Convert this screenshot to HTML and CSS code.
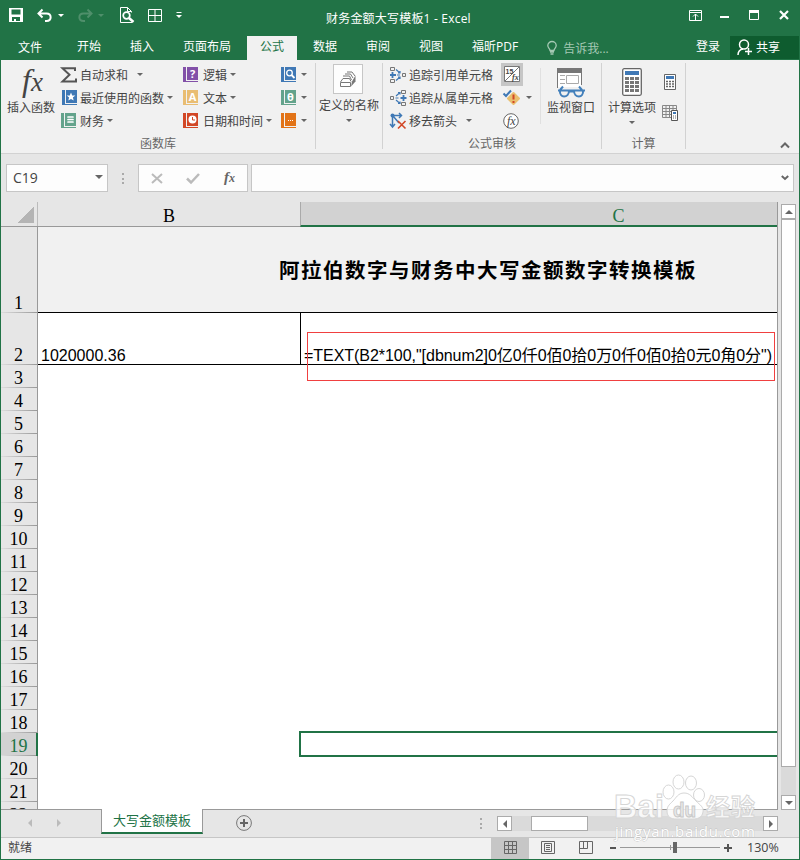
FILE: index.html
```html
<!DOCTYPE html>
<html lang="zh-CN">
  <head>
    <meta charset="UTF-8" />
    <title>财务金额大写模板1 - Excel</title>
    <link rel="stylesheet" href="styles.css">
  </head>
  <body>
    <div class="window">
      <header class="titlebar">
        <div class="quick">
          <svg class="q-save" width="14" height="14" viewBox="0 0 14 14"><path d="M0 0h14v14H0z" fill="#fff"/><path d="M2.5 1.5h9v5h-9zM3 9h8v4H7v-2H5v2H3z" fill="#217346"/></svg>
          <svg class="q-undo" width="15" height="13" viewBox="0 0 15 13"><path d="M5.5 0.5L1.5 4.5l4 4M2 4.5h7.5c5.5 0 5.500 7.500 0 7.500H8" fill="none" stroke="#fff" stroke-width="2"/></svg>
          <i class="arrow white"></i>
          <svg class="q-redo" width="15" height="13" viewBox="0 0 15 13"><path d="M9.500 0.500l4 4-4 4M13 4.500H5.500C0 4.500 0 12 5.500 12H7" fill="none" stroke="#4f8f6b" stroke-width="2"/></svg>
          <i class="arrow dim"></i>
          <svg class="q-preview" width="15" height="16" viewBox="0 0 15 16"><path d="M12 15.500H.5V.5h7l4 4v1M7.500.5v4h4" fill="none" stroke="#fff"/><circle cx="6.500" cy="8.500" r="3.300" fill="#217346" stroke="#fff" stroke-width="1.700"/><path d="M9 11l4.500 4" stroke="#fff" stroke-width="2.500"/></svg>
          <svg class="q-grid" width="14" height="13" viewBox="0 0 14 13"><path d="M.5.5h13v12H.5zM7 .5v12M.5 6.500h13" fill="none" stroke="#fff"/></svg>
          <svg class="q-more" width="6" height="7" viewBox="0 0 6 7"><path d="M.5.5h5" stroke="#fff"/><path d="M0 3h6L3 6z" fill="#fff"/></svg>
        </div>
        <div class="title">财务金额大写模板1 - Excel</div>
        <div class="winbuttons">
          <svg width="13" height="11" viewBox="0 0 13 11"><path d="M.5.5h12v10H.5zM.5 2.500h12M6.500 4v6M4 6.500L6.500 4 9 6.500" fill="none" stroke="#fff"/></svg>
          <svg width="9" height="11" viewBox="0 0 9 11"><path d="M0 7h9" stroke="#fff" stroke-width="2"/></svg>
          <svg width="10" height="10" viewBox="0 0 10 10"><path d="M.5.500h9v9h-9z" fill="none" stroke="#fff"/><path d="M0 0h10v3H0z" fill="#fff"/></svg>
          <svg width="10" height="10" viewBox="0 0 10 10"><path d="M1 1l8 8M9 1L1 9" stroke="#fff" stroke-width="2.200"/></svg>
        </div>
      </header>

      <nav class="tabs">
        <span class="tab file">文件</span>
        <span class="tab">开始</span>
        <span class="tab">插入</span>
        <span class="tab">页面布局</span>
        <span class="tab active">公式</span>
        <span class="tab">数据</span>
        <span class="tab">审阅</span>
        <span class="tab">视图</span>
        <span class="tab">福昕PDF</span>
        <span class="tell">
          <svg width="10" height="14" viewBox="0 0 10 14"><path d="M3 9.500C3 7.500.8 7 .8 4.500a4.200 4 0 0 1 8.400 0C9.200 7 7 7.500 7 9.500zM3 11h4M3.500 13h3" fill="none" stroke="#a5c9b4" stroke-width="1.300"/></svg>
          告诉我...
        </span>
        <span class="login">登录</span>
        <span class="share">
          <svg width="16" height="17" viewBox="0 0 16 17"><circle cx="7" cy="5.500" r="4.500" fill="none" stroke="#fff" stroke-width="1.500"/><path d="M1 16c0-3.500 2-5.500 5-6M11.500 9v7M8 12.500h7" fill="none" stroke="#fff" stroke-width="1.500"/></svg>
          共享
        </span>
      </nav>

      <section class="ribbon">
        <div class="group library">
          <div class="tools">
            <div class="big insert">
              <svg width="26" height="31" viewBox="0 0 26 31"><text class="fx" x="4" y="24" font-size="32">f</text><text class="fx" x="13" y="24" font-size="27">x</text></svg>
              <span>插入函数</span>
            </div>
            <div class="col col-a">
              <div class="tool wide-arrow"><svg width="16" height="16" viewBox="0 0 16 16"><path d="M14 4V1.200H1.500l7 6.500-7 6.800H15V11.500" fill="none" stroke="#555" stroke-width="2"/></svg>自动求和<i class="arrow"></i></div>
              <div class="tool"><svg width="16" height="16" viewBox="0 0 16 16"><path d="M1 0h3v15H1zM5 0h11v13H5zM3 14h13v1H3z" fill="#3f78b5"/><path d="M10 2.500l1.200 2.900 3.100.2-2.400 2 .8 3L10 8.900l-2.700 1.700.8-3-2.400-2 3.100-.2z" fill="#fff"/></svg>最近使用的函数<i class="arrow"></i></div>
              <div class="tool"><svg width="16" height="16" viewBox="0 0 16 16"><path d="M0 0h3v15H0zM4 0h11v13H4zM2 14h13v1H2z" fill="#63a38c"/><path d="M7 4h5M7 6.500h5M7 9h5" stroke="#fff" stroke-width="1.700" stroke-linecap="round"/></svg>财务<i class="arrow"></i></div>
            </div>
            <div class="col col-b">
              <div class="tool"><svg width="16" height="16" viewBox="0 0 16 16"><path d="M0 0h3v15H0zM4 0h11v13H4zM2 14h13v1H2z" fill="#8250a8"/><text class="glyph" x="9.500" y="10.500">?</text></svg>逻辑<i class="arrow"></i></div>
              <div class="tool"><svg width="16" height="16" viewBox="0 0 16 16"><path d="M0 0h3v15H0zM4 0h11v13H4zM2 14h13v1H2z" fill="#e9bd72"/><text class="glyph" x="9.500" y="10.500">A</text></svg>文本<i class="arrow"></i></div>
              <div class="tool"><svg width="16" height="16" viewBox="0 0 16 16"><path d="M0 0h3v15H0zM4 0h11v13H4zM2 14h13v1H2z" fill="#d24726"/><circle cx="9.500" cy="6.500" r="4" fill="#fff"/><path d="M9.500 4V7H12" fill="none" stroke="#d24726"/></svg>日期和时间<i class="arrow"></i></div>
            </div>
            <div class="col col-c">
              <div class="tool"><svg width="16" height="16" viewBox="0 0 16 16"><path d="M0 0h3v15H0zM4 0h11v13H4zM2 14h13v1H2z" fill="#3f78b5"/><circle cx="8.500" cy="6" r="2.800" fill="none" stroke="#fff" stroke-width="1.300"/><path d="M10.500 8l3 3" stroke="#fff" stroke-width="1.800"/></svg><i class="arrow"></i></div>
              <div class="tool"><svg width="16" height="16" viewBox="0 0 16 16"><path d="M0 0h3v15H0zM4 0h11v13H4zM2 14h13v1H2z" fill="#63a38c"/><text class="glyph" x="9.500" y="10.500">θ</text></svg><i class="arrow"></i></div>
              <div class="tool"><svg width="16" height="16" viewBox="0 0 16 16"><path d="M0 0h3v15H0zM4 0h11v13H4zM2 14h13v1H2z" fill="#e27317"/><path d="M7 7.500h1M9 7.500h1M11 7.500h1" stroke="#fff" stroke-width="1.200"/></svg><i class="arrow"></i></div>
            </div>
          </div>
          <div class="group-name">函数库</div>
        </div>

        <div class="group names">
          <div class="big">
            <div class="iconbox">
              <svg width="18" height="17" viewBox="0 0 18 17"><path d="M1.500 11.500h10v4h-10zM1.500 11l2.500-3.500h6.500l1.500 3M4 5h6.500l2 4M6 3h5.500l2.500 4M8 1h5l3 4" fill="none" stroke="#777"/><path d="M12 15.500l4.500-5V4.500l-3.500 6z" fill="#777"/></svg>
            </div>
            <span>定义的名称</span>
            <i class="arrow"></i>
          </div>
        </div>

        <div class="group audit">
          <div class="tools">
            <div class="col col-d">
              <div class="tool"><svg width="17" height="16" viewBox="0 0 17 16"><path d="M.5.500h4v3h-4zM.5 12.500h4v3h-4zM12.500 6.500h3v3h-3z" fill="none" stroke="#777"/><path d="M2.500 5v6M0 8h6" fill="none" stroke="#3f78b5" stroke-width="1.800"/><path d="M7 8h3M6 2.500l4 3.500M6 13.500l4-3.500M8 6h2V4M8 10h2v2" fill="none" stroke="#3f78b5" stroke-width="1.200"/></svg>追踪引用单元格</div>
              <div class="tool"><svg width="17" height="16" viewBox="0 0 17 16"><path d="M.5 6.500h3v3h-3zM11.500.500h4v3h-4zM11.500 12.500h4v3h-4z" fill="none" stroke="#777"/><path d="M13.500 5v6M10.500 8h6" fill="none" stroke="#3f78b5" stroke-width="1.800"/><path d="M5.500 8h3M6 6l4-3.500M6 10l4 3.500M8 2.500h2v2M8 13.500h2v-2" fill="none" stroke="#3f78b5" stroke-width="1.200"/></svg>追踪从属单元格</div>
              <div class="tool wide-arrow"><svg width="17" height="16" viewBox="0 0 17 16"><path d="M2.500 1.500v12M0 11l2.500 3L5 11M2.500 2.500h9M9 0l2.500 2.500L9 5M3 3l6 7" fill="none" stroke="#3f78b5" stroke-width="1.500"/><circle cx="2.500" cy="2.500" r="2" fill="#3f78b5"/><path d="M8 8l7.500 7.500M15.500 8L8 15.500" stroke="#d24726" stroke-width="1.600"/></svg>移去箭头<i class="arrow"></i></div>
            </div>
            <div class="col col-e">
              <div class="tool"><span class="pressed"><svg width="16" height="16" viewBox="0 0 16 16"><path d="M.5.500h15v15H.5z" fill="#fff" stroke="#777"/><path d="M1 15L15 1" stroke="#777"/><text x="1.500" y="7.500" class="mini">15</text><text x="8" y="14" class="mini fx-mini">fx</text></svg></span></div>
              <div class="tool"><svg width="17" height="16" viewBox="0 0 17 16"><path d="M10.500 3l5.500 5.500-5.500 5.500L5 8.500z" fill="#eabf6f" stroke="#eabf6f" stroke-width="2" stroke-linejoin="round"/><path d="M10.500 4.500v5M10.500 11v2" stroke="#d24726" stroke-width="2"/><path d="M.5 3.500L3 6 8 .5" fill="none" stroke="#3f78b5" stroke-width="2"/></svg><i class="arrow"></i></div>
              <div class="tool"><svg width="17" height="16" viewBox="0 0 17 16"><circle cx="8" cy="8" r="7.300" fill="#fff" stroke="#666"/><text class="fx" x="4" y="11.500" font-size="12">fx</text></svg></div>
            </div>
            <div class="big watch">
              <svg width="30" height="30" viewBox="0 0 30 30"><path d="M1.500 1v19M25.500 1v16" stroke="#777"/><path d="M2 5h23v14H2z" fill="#fff"/><path d="M1 0h25v5H1z" fill="#777"/><path d="M10.500 7.500h12v8h-12zM4 7.500h5M4 11.500h5M4 15.500h5" fill="none" stroke="#aaa"/><path d="M4 22l3-3.500M26 22l-3-3.500M2 22.500h27M13 23.500h5M4 22.500c-1 8 9 8 9 0zM18 22.500c0 8 10 8 9 0z" fill="none" stroke="#4380bb" stroke-width="2"/></svg>
              <span>监视窗口</span>
            </div>
          </div>
          <div class="group-name">公式审核</div>
        </div>

        <div class="group calc">
          <div class="tools">
            <div class="big options">
              <svg width="20" height="28" viewBox="0 0 20 28"><rect x=".7" y=".7" width="18.600" height="26.600" rx="1.500" fill="#fff" stroke="#666" stroke-width="1.300"/><path d="M3 3h14v4H3z" fill="#3f78b5"/><path d="M3 10.500h14M3 14.500h14M3 18.500h14M3 22.500h14" stroke="#777" stroke-width="3" stroke-dasharray="4 1"/></svg>
              <span>计算选项</span>
              <i class="arrow"></i>
            </div>
            <div class="calc-small">
              <svg width="12" height="16" viewBox="0 0 12 16"><path d="M.5.500h11v15H.5z" fill="#fff" stroke="#666"/><path d="M2 2h8v3H2z" fill="#3f78b5"/><path d="M2 7.500h8M2 10h8M2 12.500h8" stroke="#666" stroke-width="1.600" stroke-dasharray="2 1"/></svg>
              <svg width="16" height="16" viewBox="0 0 16 16"><path d="M.5.500h14v12H.5zM.5 3.500h14M.5 6.500h14M.5 9.500h14M4 .5v12M7.500.5v12M11 .5v12" fill="none" stroke="#888"/><path d="M9.500 5.500h6v10h-6z" fill="#fff" stroke="#555"/><path d="M11 7h3v2h-3z" fill="#3f78b5"/><path d="M11 11h3M11 13h3" stroke="#666" stroke-dasharray="1 1"/></svg>
            </div>
          </div>
          <div class="group-name">计算</div>
        </div>
        <svg class="collapse" width="10" height="7" viewBox="0 0 10 7"><path d="M1 5.500l4-4 4 4" fill="none" stroke="#666" stroke-width="2"/></svg>
      </section>

      <section class="formula-bar">
        <div class="box name-box">C19<i class="arrow big-arrow"></i></div>
        <i class="grip"></i>
        <div class="box buttons">
          <svg width="12" height="11" viewBox="0 0 12 11"><path d="M1 1l10 9M11 1L1 10" stroke="#bbb" stroke-width="2"/></svg>
          <svg width="14" height="11" viewBox="0 0 14 11"><path d="M1 5.500L5 9.500 13 1" fill="none" stroke="#bbb" stroke-width="2.500"/></svg>
          <svg width="14" height="16" viewBox="0 0 14 16"><text class="fx bold" x="1" y="12" font-size="15">f</text><text class="fx bold" x="6" y="12" font-size="12">x</text></svg>
        </div>
        <div class="box input"><svg width="8" height="6" viewBox="0 0 8 6"><path d="M.8 1L4 4l3.200-3" fill="none" stroke="#666" stroke-width="2"/></svg></div>
      </section>

      <section class="workspace">
        <div class="sheet">
          <div class="col-heads">
            <div class="corner"></div>
            <div class="head-b">B</div>
            <div class="head-c">C</div>
          </div>
          <div class="row row-1"><div class="num">1</div><div class="merged">阿拉伯数字与财务中大写金额数字转换模板</div></div>
          <div class="row row-2">
            <div class="num">2</div>
            <div class="cell b">1020000.36</div>
            <div class="cell c">=TEXT(B2*100,"[dbnum2]0亿0仟0佰0拾0万0仟0佰0拾0元0角0分")<div class="mark"></div></div>
          </div>
          <div class="row"><div class="num">3</div></div>
          <div class="row"><div class="num">4</div></div>
          <div class="row"><div class="num">5</div></div>
          <div class="row"><div class="num">6</div></div>
          <div class="row"><div class="num">7</div></div>
          <div class="row"><div class="num">8</div></div>
          <div class="row"><div class="num">9</div></div>
          <div class="row"><div class="num">10</div></div>
          <div class="row"><div class="num">11</div></div>
          <div class="row"><div class="num">12</div></div>
          <div class="row"><div class="num">13</div></div>
          <div class="row"><div class="num">14</div></div>
          <div class="row"><div class="num">15</div></div>
          <div class="row"><div class="num">16</div></div>
          <div class="row"><div class="num">17</div></div>
          <div class="row"><div class="num">18</div></div>
          <div class="row current"><div class="num">19</div><div class="cell b"></div><div class="cell c"><div class="cursor"></div></div></div>
          <div class="row"><div class="num">20</div></div>
          <div class="row"><div class="num">21</div></div>
          <div class="row"><div class="num">22</div></div>
        </div>
        <div class="vscroll">
          <div class="sbtn"><i class="tri up"></i></div>
          <div class="vthumb"></div>
          <div class="sbtn last"><i class="tri down"></i></div>
        </div>
      </section>

      <section class="sheet-tabs">
        <div class="tab-nav"><i class="tri left"></i><i class="tri right"></i></div>
        <div class="sheet-tab">大写金额模板</div>
        <div class="tab-rest">
          <svg class="add" width="16" height="16" viewBox="0 0 16 16"><circle cx="8" cy="8" r="7.400" fill="none" stroke="#777"/><path d="M8 4v8M4 8h8" stroke="#666" stroke-width="2"/></svg>
          <i class="grip"></i>
          <div class="hscroll">
            <div class="sbtn"><i class="tri left"></i></div>
            <div class="hthumb"></div>
            <div class="sbtn last"><i class="tri right"></i></div>
          </div>
        </div>
      </section>

      <footer class="status">
        <span class="ready">就绪</span>
        <div class="view on"><svg width="13" height="13" viewBox="0 0 13 13"><path d="M.5.500h12v12H.5zM4.500.5v12M8.500.5v12M.5 4.500h12M.5 8.500h12" fill="none" stroke="#666"/></svg></div>
        <div class="view"><svg width="14" height="13" viewBox="0 0 14 13"><path d="M.5.500h13v12H.5zM3.500 2.500h7v8h-7zM5 4.500h4M5 6.500h4M5 8.500h4" fill="none" stroke="#666"/></svg></div>
        <div class="view"><svg width="14" height="13" viewBox="0 0 14 13"><path d="M.5.500h13v12H.5zM.5 7.500h8v-7M4.500.500v7" fill="none" stroke="#666"/></svg></div>
        <div class="zoom">
          <i class="minus"></i>
          <div class="slider"><i class="mid"></i><i class="knob"></i></div>
          <svg width="8" height="8" viewBox="0 0 8 8"><path d="M4 0v8M0 4h8" stroke="#555" stroke-width="2"/></svg>
          <span>130%</span>
        </div>
      </footer>

      <svg class="watermark" width="150" height="75" viewBox="0 0 150 75">
        <g class="wm">
          <text x="3" y="46" font-size="33" textLength="50" lengthAdjust="spacingAndGlyphs">Bai</text>
          <ellipse cx="57.500" cy="20" rx="5.500" ry="7"/>
          <ellipse cx="67.500" cy="10" rx="5.500" ry="7"/>
          <ellipse cx="80" cy="11" rx="5.500" ry="7"/>
          <ellipse cx="88" cy="23" rx="5.500" ry="6.500"/>
          <path d="M73 21c6 0 8 4 12 8s8 6 7 11c-1 6-6 7-10 7H65c-5 0-9-2-9-8 0-5 3-7 6-10s5-8 11-8z"/>
          <text class="du" x="62" y="45" font-size="21" textLength="23" lengthAdjust="spacingAndGlyphs">du</text>
          <text class="cn" x="95" y="44" font-size="24" textLength="49">经验</text>
        </g>
        <text class="url" x="4" y="65" textLength="140">jingyan.baidu.com</text>
      </svg>
    </div>
  </body>
</html>
```
FILE: styles.css
```css
* {
  box-sizing: border-box;
}
body {
  margin: 0;
  font-family: "Open Sans", "Noto Sans CJK SC", sans-serif;
  font-size: 12px;
  color: #444;
}
svg {
  display: block;
  flex: none;
  overflow: visible;
}
.window {
  position: relative;
  display: flex;
  flex-direction: column;
  width: 800px;
  height: 860px;
  border: 1px solid #217346;
  border-top: 0;
  background: #e6e6e6;
  overflow: hidden;
}

/* title bar */
.titlebar {
  display: flex;
  height: 36px;
  background: #217346;
  color: #fff;
}
.quick {
  display: flex;
  align-items: center;
  width: 325px;
  padding: 0 0 6px 8px;
}
.q-undo {
  margin: 0 6px 0 14px;
}
.q-redo {
  margin: 0 5px 0 14px;
}
.q-preview {
  margin-left: 16px;
}
.q-grid {
  margin-left: 13px;
}
.q-more {
  margin-left: 14px;
}
.title {
  line-height: 37px;
  letter-spacing: 0.2px;
  white-space: nowrap;
}
.winbuttons {
  display: flex;
  align-items: center;
  margin-left: auto;
  gap: 20px;
  padding: 0 10px 6px 0;
}
.winbuttons svg:first-child {
  margin-right: -2px;
}

.arrow {
  flex: none;
  width: 0;
  height: 0;
  margin-left: 3px;
  border: 3px solid transparent;
  border-top-color: #666;
  border-bottom: 0;
}
.arrow.white {
  margin-left: 0;
  border-top-color: #fff;
}
.arrow.dim {
  margin-left: 0;
  border-top-color: #4f8f6b;
}

/* ribbon tabs */
.tabs {
  display: flex;
  height: 24px;
  gap: 3px;
  background: #217346;
  color: #fff;
  line-height: 21px;
  white-space: nowrap;
}
.tab {
  padding: 0 13px;
}
.tab.file {
  width: 60px;
  padding: 1px 0 0 17px;
}
.tab.active {
  background: #f1f1f1;
  color: #217346;
}
.tell {
  display: flex;
  align-items: center;
  gap: 6px;
  margin-left: 13px;
  color: #a5c9b4;
}
.login {
  margin-left: auto;
}
.share {
  display: flex;
  align-items: center;
  gap: 3px;
  width: 69px;
  height: 23px;
  margin-left: 7px;
  padding-left: 7px;
  background: #0e5c2f;
}

/* ribbon */
.ribbon {
  display: flex;
  height: 94px;
  padding-top: 3px;
  background: #f1f1f1;
  border-bottom: 1px solid #d2d2d2;
  white-space: nowrap;
}
.group {
  display: flex;
  flex-direction: column;
  height: 86px;
  border-right: 1px solid #d2d2d2;
}
.tools {
  display: flex;
  flex: none;
  height: 71px;
}
.group-name {
  color: #666;
  text-align: center;
  line-height: 20px;
}
.library {
  width: 315px;
}
.names {
  width: 67px;
}
.audit {
  width: 219px;
}
.calc {
  width: 84px;
}
.big {
  display: flex;
  flex-direction: column;
  align-items: center;
  line-height: 16px;
}
.big .arrow {
  margin: 5px 0 0;
}
.insert {
  width: 60px;
  padding-top: 4px;
}
.insert span {
  margin-top: 2px;
}
.tool {
  display: flex;
  align-items: center;
  height: 23px;
}
.tool svg {
  margin-right: 3px;
}
.wide-arrow .arrow {
  margin-left: 9px;
}
.col-a {
  width: 122px;
}
.col-b {
  width: 98px;
}
.col-b svg {
  margin-right: 4px;
}
.col-c .arrow {
  margin-left: 1px;
}
.fx {
  font-family: "Liberation Serif", serif;
  font-style: italic;
  fill: #444;
}
.fx.bold {
  font-weight: bold;
  fill: #666;
}
.glyph {
  font: bold 11px "Open Sans", sans-serif;
  fill: #fff;
  text-anchor: middle;
}
.mini {
  font: bold 7px "Liberation Sans", sans-serif;
  fill: #444;
}
.fx-mini {
  font-family: "Liberation Serif", serif;
  font-style: italic;
  font-size: 8px;
}
.iconbox {
  display: flex;
  align-items: center;
  justify-content: center;
  width: 30px;
  height: 30px;
  margin: 1px 2px 4px 0;
  border: 1px solid #c6c6c6;
  background: #fdfdfd;
}
.col-d {
  width: 117px;
  padding-left: 7px;
}
.col-d svg {
  margin-right: 2px;
}
.col-e {
  width: 40px;
}
.col-e .tool {
  padding-left: 3px;
}
.pressed {
  width: 22px;
  height: 23px;
  margin-left: -2px;
  padding: 3px;
  background: #c6c6c6;
}
.watch {
  width: 61px;
  height: 56px;
  margin-top: 5px;
  border-left: 1px solid #e0e0e0;
}
.watch span {
  margin-top: 2px;
}
.options {
  width: 60px;
  padding-top: 5px;
}
.options span {
  margin-top: 4px;
}
.calc-small {
  display: flex;
  flex-direction: column;
  align-items: center;
  gap: 15px;
  padding-top: 11px;
}
.collapse {
  margin: 79px 0 0 94px;
}

/* formula bar */
.formula-bar {
  display: flex;
  height: 48px;
  padding: 10px 5px;
}
.box {
  display: flex;
  align-items: center;
  height: 28px;
  border: 1px solid #c6c6c6;
  background: #fdfdfd;
}
.name-box {
  width: 102px;
  padding: 0 0 2px 6px;
  justify-content: space-between;
  font-size: 14px;
}
.big-arrow {
  margin-right: 4px;
  border-width: 4px 4px 0;
}
.grip {
  width: 2px;
  height: 11px;
  margin: 9px 14px 0 14px;
  background: repeating-linear-gradient(#aaa 0 2px, transparent 2px 4.5px);
}
.buttons {
  width: 110px;
  gap: 23px;
  padding-left: 12px;
}
.input {
  flex: 1;
  justify-content: flex-end;
  margin-left: 3px;
  padding-right: 4px;
}

/* sheet */
.workspace {
  display: flex;
  height: 607px;
}
.sheet {
  width: 777px;
  height: 608px;
  overflow: hidden;
  background: #fff;
  border-right: 1px solid #999;
  font-family: "Liberation Sans", "Noto Sans CJK SC", sans-serif;
  font-size: 16px;
  color: #000;
}
.col-heads {
  display: flex;
  height: 25px;
  background: #e6e6e6;
  border-bottom: 1px solid #999;
  font: 18px/28px "Liberation Serif", serif;
  text-align: center;
}
.corner {
  width: 37px;
  border-right: 1px solid #bbb;
  background: linear-gradient(135deg, transparent 50%, #b4b4b4 50%) 16px 4px / 17px 17px no-repeat;
}
.head-b {
  width: 262px;
  height: 24px;
}
.head-c {
  flex: 1;
  height: 25px;
  padding-left: 159px;
  background: #d2d2d2;
  border-left: 1px solid #aaa;
  border-bottom: 2px solid #217346;
  color: #217346;
}
.row {
  display: flex;
  height: 23px;
}
.num {
  display: flex;
  align-items: flex-end;
  justify-content: center;
  width: 37px;
  height: 100%;
  padding-right: 1px;
  border-right: 1px solid #999;
  background: linear-gradient(90deg, #ddd, #999) bottom / 100% 1px no-repeat #e6e6e6;
  font: 18px/20px "Liberation Serif", serif;
}
.row-1 {
  height: 86px;
}
.merged {
  flex: 1;
  padding-left: 241px;
  background: #f1f1f1;
  border-bottom: 1px solid #000;
  font-size: 20.5px;
  font-weight: 600;
  line-height: 88px;
  letter-spacing: 1.5px;
  white-space: nowrap;
}
.row-2 {
  height: 52px;
}
.cell {
  display: flex;
  align-items: flex-end;
  line-height: 17px;
  white-space: nowrap;
}
.cell.b {
  width: 263px;
  padding-left: 3px;
}
.cell.c {
  position: relative;
  flex: 1;
  padding-left: 3px;
  letter-spacing: -0.04px;
}
.row-2 .cell {
  border-bottom: 1px solid #000;
}
.row-2 .b {
  border-right: 1px solid #000;
}
.mark {
  position: absolute;
  left: 6px;
  top: 19px;
  width: 468px;
  height: 49px;
  border: 1px solid #f04040;
}
.current .num {
  background-color: #d2d2d2;
  border-right: 2px solid #217346;
  padding-right: 0;
  color: #217346;
}
.cursor {
  position: absolute;
  left: -2px;
  top: -2px;
  width: 490px;
  height: 26px;
  border: 2px solid #217346;
}

/* scrollbars */
.vscroll {
  display: flex;
  flex-direction: column;
  width: 15px;
  height: 606px;
  margin: 2px 0 0 3px;
  background: #dadada;
}
.sbtn {
  display: flex;
  align-items: center;
  justify-content: center;
  flex: none;
  width: 15px;
  height: 15px;
  border: 1px solid #ababab;
  background: #fff;
}
.vthumb {
  height: 548px;
  border: 1px solid #ababab;
  background: #fff;
}
.vscroll .last {
  margin-top: auto;
}
.tri {
  width: 0;
  height: 0;
  border: 4px solid transparent;
}
.tri.up {
  border-top: 0;
  border-bottom-color: #666;
}
.tri.down {
  border-bottom: 0;
  border-top-color: #666;
}
.tri.left {
  border-left: 0;
  border-right-color: #666;
}
.tri.right {
  border-right: 0;
  border-left-color: #666;
}

/* sheet tabs */
.sheet-tabs {
  display: flex;
  height: 28px;
}
.tab-nav {
  display: flex;
  align-items: center;
  gap: 25px;
  width: 100px;
  padding: 0 0 2px 27px;
  border-top: 1px solid #999;
}
.tab-nav .left {
  border-right-color: #bbb;
}
.tab-nav .right {
  border-left-color: #bbb;
}
.sheet-tab {
  width: 102px;
  height: 25px;
  border: 1px solid #999;
  border-top: 0;
  border-bottom: 2px solid #217346;
  background: #fff;
  color: #217346;
  font-size: 13px;
  line-height: 23px;
  text-align: center;
}
.tab-rest {
  display: flex;
  width: 575px;
  border-top: 1px solid #999;
}
.add {
  margin: 5px 0 0 33px;
}
.tab-rest .grip {
  margin: 8px 15px 0 228px;
}
.hscroll {
  display: flex;
  flex: none;
  width: 281px;
  height: 15px;
  margin-top: 6px;
  background: #dadada;
}
.hthumb {
  width: 57px;
  margin-left: 19px;
  border: 1px solid #ababab;
  background: #fff;
}
.hscroll .last {
  margin-left: auto;
}

/* status bar */
.status {
  display: flex;
  height: 22px;
  border-top: 1px solid #c6c6c6;
  background: #f1f1f1;
  line-height: 19px;
}
.ready {
  width: 490px;
  padding-left: 7px;
}
.view {
  display: flex;
  align-items: center;
  justify-content: center;
  width: 38px;
  padding-bottom: 2px;
}
.view.on {
  background: #c6c6c6;
}
.zoom {
  display: flex;
  align-items: center;
  margin-left: 5px;
  padding-bottom: 2px;
}
.minus {
  width: 6px;
  height: 2px;
  background: #555;
}
.slider {
  position: relative;
  width: 100px;
  height: 1px;
  margin: 0 4px;
  background: #999;
}
.mid {
  position: absolute;
  left: 50px;
  top: -2px;
  width: 1px;
  height: 5px;
  background: #999;
}
.knob {
  position: absolute;
  left: 53px;
  top: -5px;
  width: 4px;
  height: 11px;
  background: #666;
}
.zoom span {
  margin-left: 15px;
  font-size: 12.5px;
}

.watermark {
  position: absolute;
  left: 610px;
  top: 772px;
}
.wm {
  fill: rgba(255, 255, 255, 0.8);
  stroke: #d6d6d6;
  stroke-width: 1;
  font-family: "Liberation Sans", sans-serif;
  font-weight: bold;
}
.du {
  fill: #e8e8e8;
  stroke: #c8c8c8;
}
.cn {
  font-family: "Noto Sans CJK SC", sans-serif;
}
.url {
  font: 15px "Open Sans", sans-serif;
  fill: #fff;
  stroke: #c4c4c4;
  stroke-width: 0.8;
  paint-order: stroke;
}
```
